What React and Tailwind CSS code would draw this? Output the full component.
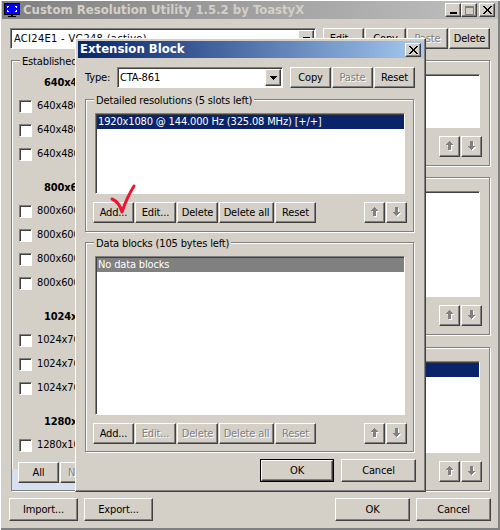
const raised = 'border border-t-white border-l-white border-r-[#404040] border-b-[#404040] shadow-[inset_-1px_-1px_0_#808080] bg-[#d4d0c8]'
const sunken = 'border border-t-[#808080] border-l-[#808080] border-r-white border-b-white shadow-[inset_1px_1px_0_#404040] bg-white'
const disabledText = 'text-[#808080] [text-shadow:1px_1px_0_#ffffff]'

function Btn({ children, className = '', disabled }) {
  return (
    <div className={`${raised} flex items-center justify-center shrink-0 ${disabled ? disabledText : 'text-black'} ${className}`}>
      {children}
    </div>
  )
}

function TextBtn({ children, className = '', disabled }) {
  return (
    <Btn className={`pt-px ${className}`} disabled={disabled}>{children}</Btn>
  )
}

function ArrowIcon({ down }) {
  const d = down ? 'M3 0H6V5H8L4.5 9L1 5H3Z' : 'M4.5 0L8 4H6V9H3V4H1Z'
  return (
    <svg width="10" height="11" viewBox="0 0 10 11" shapeRendering="crispEdges">
      <path d={d} fill="#ffffff" transform="translate(1 1)" />
      <path d={d} fill="#808080" />
    </svg>
  )
}

function ArrowPair({ className = '' }) {
  return (
    <div className={`flex gap-px ${className}`}>
      <Btn className="w-[21px] h-[21px]"><ArrowIcon /></Btn>
      <Btn className="w-[21px] h-[21px]"><ArrowIcon down /></Btn>
    </div>
  )
}

function DropArrow() {
  return (
    <Btn className="w-[16px] h-[17px] ml-auto">
      <svg width="7" height="4" viewBox="0 0 7 4" shapeRendering="crispEdges"><path d="M0 0H7V1H6V2H5V3H4V4H3V3H2V2H1V1H0Z" fill="#000000" /></svg>
    </Btn>
  )
}

function Combo({ text, className = '', textClass = '' }) {
  return (
    <div className={`${sunken} flex items-center pl-[2px] pr-[1px] ${className}`}>
      <span className={`truncate pt-px ${textClass}`}>{text}</span>
      <DropArrow />
    </div>
  )
}

function Group({ label, className = '', children }) {
  return (
    <div className={`relative border border-[#808080] shadow-[1px_1px_0_#ffffff,inset_1px_1px_0_#ffffff] flex flex-col ${className}`}>
      {label && <span className="absolute -top-[6px] left-[8px] bg-[#d4d0c8] px-[2px] leading-[14px]">{label}</span>}
      {children}
    </div>
  )
}

function ResRow({ text }) {
  return (
    <div className="flex items-center h-[24px] pl-[7px] gap-[5px]">
      <div className={`${sunken} w-[13px] h-[13px] shrink-0`} />
      <span className="whitespace-nowrap pt-px">{text}</span>
    </div>
  )
}

function ResHeader({ text, className = '' }) {
  return <div className={`h-[22px] flex items-center pl-[32px] pt-px font-bold whitespace-nowrap ${className}`}>{text}</div>
}

function MonitorIcon() {
  return (
    <svg width="16" height="14" viewBox="0 0 16 14" shapeRendering="crispEdges" className="shrink-0">
      <rect x="0" y="0" width="16" height="12" fill="#000000" />
      <rect x="1" y="1" width="14" height="10" fill="#0000ff" />
      <path d="M3 3H5V4H4V5H3ZM11 3H13V5H12V4H11ZM3 7H4V8H5V9H3ZM12 7H13V9H11V8H12Z" fill="#ffffff" />
      <rect x="7" y="12" width="2" height="1" fill="#000000" />
      <rect x="4" y="13" width="8" height="1" fill="#000000" />
    </svg>
  )
}

function CloseIcon() {
  return (
    <svg width="9" height="8" viewBox="0 0 9 8" shapeRendering="crispEdges">
      <path d="M0 0H2L4.5 3L7 0H9L5.5 4L9 8H7L4.5 5L2 8H0L3.5 4Z" fill="#000000" />
    </svg>
  )
}

function ExtensionBlock() {
  return (
    <div className="absolute left-[75px] top-[38px] w-[351px] h-[454px] bg-[#d4d0c8] border border-t-white border-l-white border-r-[#404040] border-b-[#404040] shadow-[inset_-1px_-1px_0_#808080] pl-[2px] pr-[1px] pt-[2px] flex flex-col">
      <div className="h-[17px] bg-gradient-to-r from-[#0a246a] to-[#a6caf0] flex items-center pl-[2px] pr-[3px] text-white font-bold text-[13px] tracking-normal">
        <span className="-mt-px">Extension Block</span>
        <Btn className="w-[16px] h-[14px] ml-auto"><CloseIcon /></Btn>
      </div>

      <div className="flex items-center mt-[9px] h-[21px] pl-[7px]">
        <span className="w-[32px] pt-[2px]">Type:</span>
        <Combo text="CTA-861" className="w-[166px] h-[21px]" />
        <div className="flex gap-px ml-[7px]">
          <TextBtn className="w-[41px] h-[21px]">Copy</TextBtn>
          <TextBtn className="w-[41px] h-[21px]" disabled>Paste</TextBtn>
          <TextBtn className="w-[41px] h-[21px]">Reset</TextBtn>
        </div>
      </div>

      <Group label="Detailed resolutions (5 slots left)" className="ml-[7px] w-[329px] h-[133px] mt-[11px] pl-[9px] pr-[8px]">
        <div className={`${sunken} mt-[13px] h-[81px] pl-px pt-px`}>
          <div className="h-[14px] pt-px bg-[#0a246a] text-white flex items-center pl-[1px] whitespace-nowrap">1920x1080 @ 144.000 Hz (325.08 MHz) [+/+]</div>
        </div>
        <div className="flex mt-[8px] -ml-[2px] -mr-[2px] gap-px">
          <TextBtn className="w-[41px] h-[21px]">Add...</TextBtn>
          <TextBtn className="w-[41px] h-[21px]">Edit...</TextBtn>
          <TextBtn className="w-[41px] h-[21px]">Delete</TextBtn>
          <TextBtn className="w-[55px] h-[21px]">Delete all</TextBtn>
          <TextBtn className="w-[41px] h-[21px]">Reset</TextBtn>
          <ArrowPair className="ml-auto" />
        </div>
      </Group>

      <Group label="Data blocks (105 bytes left)" className="ml-[7px] w-[329px] h-[210px] mt-[10px] pl-[9px] pr-[8px]">
        <div className={`${sunken} mt-[13px] h-[159px] pl-px pt-px`}>
          <div className="h-[14px] pt-px bg-[#808080] text-white flex items-center pl-[1px]">No data blocks</div>
        </div>
        <div className="flex mt-[8px] -ml-[2px] -mr-[2px] gap-px">
          <TextBtn className="w-[41px] h-[21px]">Add...</TextBtn>
          <TextBtn className="w-[41px] h-[21px]" disabled>Edit...</TextBtn>
          <TextBtn className="w-[41px] h-[21px]" disabled>Delete</TextBtn>
          <TextBtn className="w-[55px] h-[21px]" disabled>Delete all</TextBtn>
          <TextBtn className="w-[41px] h-[21px]" disabled>Reset</TextBtn>
          <ArrowPair className="ml-auto" />
        </div>
      </Group>

      <div className="flex mt-[7px] ml-[182px] gap-[7px]">
        <div className="border border-black"><TextBtn className="w-[72px] h-[21px]">OK</TextBtn></div>
        <TextBtn className="w-[75px] h-[23px]">Cancel</TextBtn>
      </div>
    </div>
  )
}

export default function App() {
  return (
    <div className="relative w-[500px] h-[530px] overflow-hidden bg-[#d4d0c8] text-[11px] tracking-[-0.15px] text-black font-['DejaVu_Sans_Condensed','DejaVu_Sans',sans-serif] shadow-[inset_1px_1px_0_#ffffff,inset_-2px_-2px_0_#808080] flex flex-col">
      <div className="mt-px mx-[2px] h-[18px] bg-gradient-to-r from-[#808080] to-[#c0c0c0] flex items-center pl-[2px] pr-[3px] text-[#d4d0c8] font-bold text-[13px] tracking-normal">
        <MonitorIcon />
        <span className="ml-[3px] whitespace-nowrap">Custom Resolution Utility 1.5.2 by ToastyX</span>
        <div className="ml-auto flex">
          <Btn className="w-[16px] h-[14px] items-end pb-[2px]"><div className="w-[7px] h-[2px] bg-black" /></Btn>
          <Btn className="w-[16px] h-[14px] mr-[2px]"><div className="w-[9px] h-[9px] border border-[#808080] border-t-2" /></Btn>
          <Btn className="w-[16px] h-[14px]"><CloseIcon /></Btn>
        </div>
      </div>

      <div className="flex mt-[9px] pl-[10px] h-[21px]">
        <Combo text="ACI24E1 - VG248 (active)" textClass="tracking-[0.3px] ml-px" className="w-[306px] h-[21px]" />
        <div className="flex gap-px ml-[7px]">
          <TextBtn className="w-[41px] h-[21px]">Edit...</TextBtn>
          <TextBtn className="w-[41px] h-[21px]">Copy</TextBtn>
          <TextBtn className="w-[41px] h-[21px]" disabled>Paste</TextBtn>
          <TextBtn className="w-[41px] h-[21px]">Delete</TextBtn>
        </div>
      </div>

      <div className="flex mt-[11px] pl-[11px] h-[431px]">
        <Group label="Established resolutions" className="w-[200px] pt-[11px]">
          <ResHeader text="640x480" />
          <ResRow text="640x480 @ 75 Hz" />
          <ResRow text="640x480 @ 72 Hz" />
          <ResRow text="640x480 @ 60 Hz" />
          <ResHeader text="800x600" className="mt-[11px]" />
          <ResRow text="800x600 @ 75 Hz" />
          <ResRow text="800x600 @ 72 Hz" />
          <ResRow text="800x600 @ 60 Hz" />
          <ResRow text="800x600 @ 56 Hz" />
          <ResHeader text="1024x768" className="mt-[11px]" />
          <ResRow text="1024x768 @ 75 Hz" />
          <ResRow text="1024x768 @ 70 Hz" />
          <ResRow text="1024x768 @ 60 Hz" />
          <ResHeader text="1280x1024" className="mt-[11px]" />
          <ResRow text="1280x1024 @ 75 Hz" />
          <div className="mt-[5px] flex-1 flex gap-px pl-[6px] items-start bg-[linear-gradient(transparent_7px,#d6e0f0_7px)]">
            <TextBtn className="w-[41px] h-[21px]">All</TextBtn>
            <TextBtn className="w-[41px] h-[21px]" disabled>None</TextBtn>
          </div>
        </Group>

        <div className="ml-[20px] w-[259px] flex flex-col">
          <Group className="h-[106px] pl-[9px] pr-[9px]">
            <div className={`${sunken} mt-[13px] flex-1`} />
            <ArrowPair className="justify-end mt-[8px] mb-[8px] -mr-[2px]" />
          </Group>
          <Group className="h-[158px] mt-[11px] pl-[9px] pr-[9px]">
            <div className={`${sunken} mt-[13px] flex-1`} />
            <ArrowPair className="justify-end mt-[8px] mb-[8px] -mr-[2px]" />
          </Group>
          <Group className="h-[144px] mt-[12px] pl-[9px] pr-[9px]">
            <div className={`${sunken} mt-[13px] flex-1 pl-px pt-px`}>
              <div className="h-[14px] bg-[#0a246a]" />
            </div>
            <ArrowPair className="justify-end mt-[8px] mb-[8px] -mr-[2px]" />
          </Group>
        </div>
      </div>

      <div className="flex mt-[7px] pl-[9px] pr-[9px]">
        <TextBtn className="w-[69px] h-[23px]">Import...</TextBtn>
        <TextBtn className="w-[69px] h-[23px] ml-[6px]">Export...</TextBtn>
        <TextBtn className="w-[75px] h-[23px] ml-auto">OK</TextBtn>
        <TextBtn className="w-[75px] h-[23px] ml-[6px]">Cancel</TextBtn>
      </div>

      <ExtensionBlock />

      {/* hand drawn check over the Add button */}
      <svg className="absolute left-[108px] top-[180px]" width="32" height="36" viewBox="0 0 32 36">
        <path d="M4 19C9 21 12 25 14 32C17 23 21 14 26 6" fill="none" stroke="#ee1530" strokeWidth="3" strokeLinecap="round" strokeLinejoin="round" />
      </svg>
    </div>
  )
}
